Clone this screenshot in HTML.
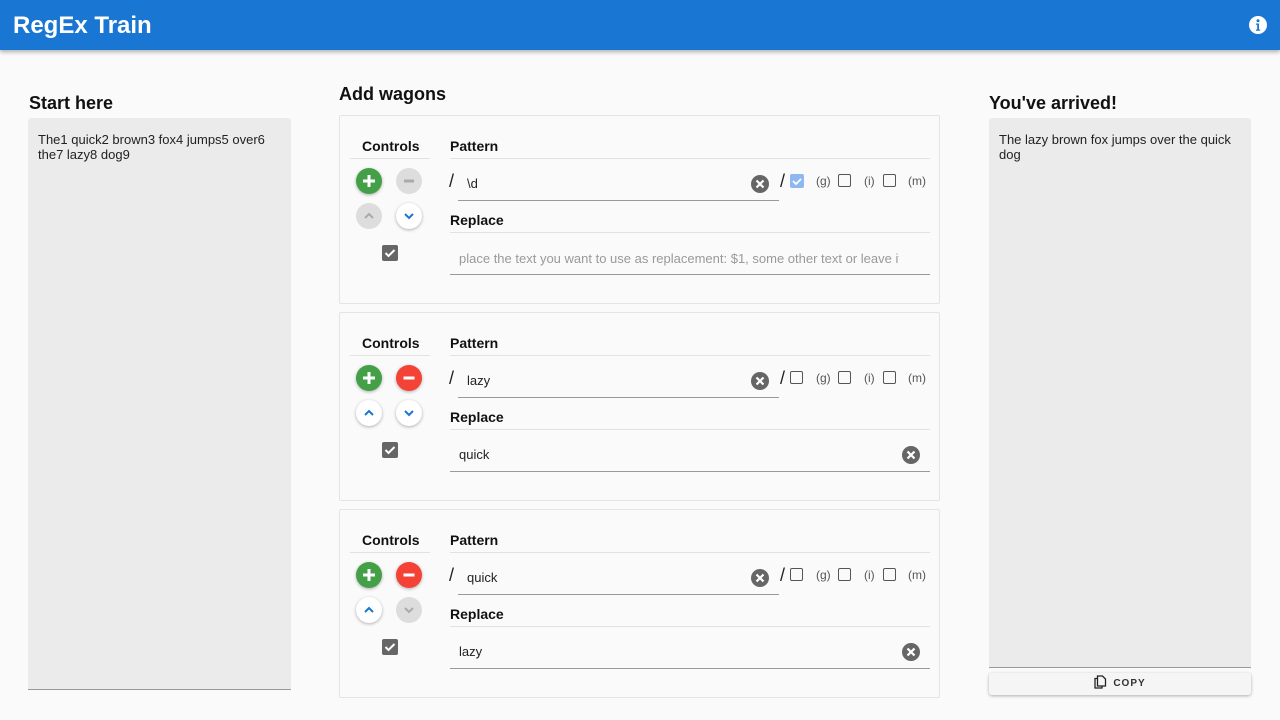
<!DOCTYPE html>
<html><head><meta charset="utf-8"><style>
*{box-sizing:border-box;margin:0;padding:0}
body{width:1280px;height:720px;background:#fafafa;font-family:"Liberation Sans",sans-serif;color:#222;position:relative;overflow:hidden}
.abs{position:absolute}
.hdr{left:0;top:0;width:1280px;height:50px;background:#1976d2;box-shadow:0 2px 4px rgba(0,0,0,.3)}
.hdr h1{position:absolute;left:13px;top:12px;color:#fff;font-size:24px;font-weight:bold}
h2{position:absolute;font-size:18px;font-weight:bold;color:#111}
.ta{background:#ebebeb;border-bottom:1px solid #999;border-radius:3px 3px 0 0;font-size:13px;color:#222;padding:14px 10px;line-height:15px}
.card{position:absolute;left:339px;width:601px;height:189px;border:1px solid #e4e4e4;background:#fafafa;border-radius:2px}
.card *{position:absolute}
.lbl{font-size:14px;font-weight:bold;color:#111}
.hl{height:1px;background:#e2e2e2}
.btn{width:26px;height:26px;border-radius:50%;box-shadow:0 1px 3px rgba(0,0,0,.3)}
.btn svg{left:0;top:0}
.ul{height:1px;background:#999}
.t{font-size:13px;color:#222}
.small{font-size:12px;color:#555}
.cb{width:13px;height:13px;border:1.5px solid #555;border-radius:2px}
</style></head><body>
<div class="abs hdr"><h1>RegEx Train</h1>
<svg class="abs" style="left:1248px;top:15px" width="20" height="20" viewBox="0 0 20 20"><circle cx="10" cy="10" r="9" fill="#fff"/><circle cx="10" cy="5.8" r="1.5" fill="#1976d2"/><path d="M8 8.5h3v6h1.2v1.2H8v-1.2h1.2v-4.8H8z" fill="#1976d2"/></svg></div>

<h2 style="left:29px;top:93px">Start here</h2>
<div class="abs ta" style="left:28px;top:118px;width:263px;height:572px">The1 quick2 brown3 fox4 jumps5 over6<br>the7 lazy8 dog9</div>
<h2 style="left:339px;top:84px">Add wagons</h2>
<h2 style="left:989px;top:93px">You've arrived!</h2>
<div class="abs ta" style="left:989px;top:118px;width:262px;height:550px">The lazy brown fox jumps over the quick<br>dog</div>
<div class="abs" style="left:989px;top:673px;width:262px;height:22px;background:#f5f5f5;border-radius:3px;box-shadow:0 1px 3px rgba(0,0,0,.3);font-size:10px;font-weight:bold;letter-spacing:1px;color:#333;text-align:center;line-height:22px">
<svg style="vertical-align:-3px;margin-right:6px" width="13" height="14" viewBox="0 0 13 14"><path d="M3.5 3.5h-2.5v9.5h7v-2" fill="none" stroke="#222" stroke-width="1.3"/><path d="M3.5 1h5l3 3v7h-8z" fill="none" stroke="#222" stroke-width="1.3"/></svg>COPY</div>

<div class="card" style="top:115px">
<div class="lbl" style="left:22px;top:22px">Controls</div><div class="hl" style="left:10px;top:42px;width:80px"></div>
<div class="lbl" style="left:110px;top:22px">Pattern</div><div class="hl" style="left:110px;top:42px;width:480px"></div>
<div class="btn" style="left:16px;top:52px;background:#43a047"><svg width="26" height="26"><path d="M13 7v12M7 13h12" stroke="#fff" stroke-width="3"/></svg></div>
<div class="btn" style="left:56px;top:52px;background:#ddd;box-shadow:none"><svg width="26" height="26"><path d="M8 13h10" stroke="#aaa" stroke-width="3"/></svg></div>
<div class="btn" style="left:16px;top:87px;background:#ddd;box-shadow:none"><svg width="26" height="26"><path d="M9 15l4-4 4 4" fill="none" stroke="#aaa" stroke-width="2"/></svg></div>
<div class="btn" style="left:56px;top:87px;background:#fff"><svg width="26" height="26"><path d="M9 11l4 4 4-4" fill="none" stroke="#1976d2" stroke-width="2"/></svg></div>
<svg style="left:42px;top:129px" width="16" height="16"><rect width="16" height="16" rx="2" fill="#666"/><path d="M3.5 8l3 3 6-6" fill="none" stroke="#fff" stroke-width="2"/></svg>
<div class="t" style="left:109px;top:55px;font-size:18px">/</div>
<div class="t" style="left:127px;top:60px">\d</div>
<svg style="left:411px;top:59px" width="18" height="18"><circle cx="9" cy="9" r="9" fill="#666"/><path d="M5.5 5.5l7 7M12.5 5.5l-7 7" stroke="#fff" stroke-width="2.2"/></svg>
<div class="ul" style="left:118px;top:84px;width:321px"></div>
<div class="t" style="left:440px;top:55px;font-size:18px">/</div>
<svg style="left:450px;top:58px" width="14" height="14"><rect width="14" height="14" rx="2" fill="#90b8f0"/><path d="M3 7l3 3 5-5" fill="none" stroke="#fff" stroke-width="1.8"/></svg>
<div class="small" style="left:476px;top:58px">(g)</div><div class="cb" style="left:498px;top:58px"></div>
<div class="small" style="left:524px;top:58px">(i)</div><div class="cb" style="left:543px;top:58px"></div>
<div class="small" style="left:568px;top:58px">(m)</div>
<div class="lbl" style="left:110px;top:96px">Replace</div><div class="hl" style="left:110px;top:116px;width:480px"></div>
<div class="t" style="left:119px;top:135px;color:#999;white-space:nowrap;width:440px;overflow:hidden">place the text you want to use as replacement: $1, some other text or leave it e</div>
<div class="ul" style="left:110px;top:158px;width:480px"></div>
</div>

<div class="card" style="top:312px">
<div class="lbl" style="left:22px;top:22px">Controls</div><div class="hl" style="left:10px;top:42px;width:80px"></div>
<div class="lbl" style="left:110px;top:22px">Pattern</div><div class="hl" style="left:110px;top:42px;width:480px"></div>
<div class="btn" style="left:16px;top:52px;background:#43a047"><svg width="26" height="26"><path d="M13 7v12M7 13h12" stroke="#fff" stroke-width="3"/></svg></div>
<div class="btn" style="left:56px;top:52px;background:#f44336"><svg width="26" height="26"><path d="M7.5 13h11" stroke="#fff" stroke-width="3"/></svg></div>
<div class="btn" style="left:16px;top:87px;background:#fff"><svg width="26" height="26"><path d="M9 15l4-4 4 4" fill="none" stroke="#1976d2" stroke-width="2"/></svg></div>
<div class="btn" style="left:56px;top:87px;background:#fff"><svg width="26" height="26"><path d="M9 11l4 4 4-4" fill="none" stroke="#1976d2" stroke-width="2"/></svg></div>
<svg style="left:42px;top:129px" width="16" height="16"><rect width="16" height="16" rx="2" fill="#666"/><path d="M3.5 8l3 3 6-6" fill="none" stroke="#fff" stroke-width="2"/></svg>
<div class="t" style="left:109px;top:55px;font-size:18px">/</div>
<div class="t" style="left:127px;top:60px">lazy</div>
<svg style="left:411px;top:59px" width="18" height="18"><circle cx="9" cy="9" r="9" fill="#666"/><path d="M5.5 5.5l7 7M12.5 5.5l-7 7" stroke="#fff" stroke-width="2.2"/></svg>
<div class="ul" style="left:118px;top:84px;width:321px"></div>
<div class="t" style="left:440px;top:55px;font-size:18px">/</div>
<div class="cb" style="left:450px;top:58px"></div>
<div class="small" style="left:476px;top:58px">(g)</div><div class="cb" style="left:498px;top:58px"></div>
<div class="small" style="left:524px;top:58px">(i)</div><div class="cb" style="left:543px;top:58px"></div>
<div class="small" style="left:568px;top:58px">(m)</div>
<div class="lbl" style="left:110px;top:96px">Replace</div><div class="hl" style="left:110px;top:116px;width:480px"></div>
<div class="t" style="left:119px;top:134px">quick</div>
<svg style="left:562px;top:133px" width="18" height="18"><circle cx="9" cy="9" r="9" fill="#666"/><path d="M5.5 5.5l7 7M12.5 5.5l-7 7" stroke="#fff" stroke-width="2.2"/></svg>
<div class="ul" style="left:110px;top:158px;width:480px"></div>
</div>

<div class="card" style="top:509px">
<div class="lbl" style="left:22px;top:22px">Controls</div><div class="hl" style="left:10px;top:42px;width:80px"></div>
<div class="lbl" style="left:110px;top:22px">Pattern</div><div class="hl" style="left:110px;top:42px;width:480px"></div>
<div class="btn" style="left:16px;top:52px;background:#43a047"><svg width="26" height="26"><path d="M13 7v12M7 13h12" stroke="#fff" stroke-width="3"/></svg></div>
<div class="btn" style="left:56px;top:52px;background:#f44336"><svg width="26" height="26"><path d="M7.5 13h11" stroke="#fff" stroke-width="3"/></svg></div>
<div class="btn" style="left:16px;top:87px;background:#fff"><svg width="26" height="26"><path d="M9 15l4-4 4 4" fill="none" stroke="#1976d2" stroke-width="2"/></svg></div>
<div class="btn" style="left:56px;top:87px;background:#ddd;box-shadow:none"><svg width="26" height="26"><path d="M9 11l4 4 4-4" fill="none" stroke="#aaa" stroke-width="2"/></svg></div>
<svg style="left:42px;top:129px" width="16" height="16"><rect width="16" height="16" rx="2" fill="#666"/><path d="M3.5 8l3 3 6-6" fill="none" stroke="#fff" stroke-width="2"/></svg>
<div class="t" style="left:109px;top:55px;font-size:18px">/</div>
<div class="t" style="left:127px;top:60px">quick</div>
<svg style="left:411px;top:59px" width="18" height="18"><circle cx="9" cy="9" r="9" fill="#666"/><path d="M5.5 5.5l7 7M12.5 5.5l-7 7" stroke="#fff" stroke-width="2.2"/></svg>
<div class="ul" style="left:118px;top:84px;width:321px"></div>
<div class="t" style="left:440px;top:55px;font-size:18px">/</div>
<div class="cb" style="left:450px;top:58px"></div>
<div class="small" style="left:476px;top:58px">(g)</div><div class="cb" style="left:498px;top:58px"></div>
<div class="small" style="left:524px;top:58px">(i)</div><div class="cb" style="left:543px;top:58px"></div>
<div class="small" style="left:568px;top:58px">(m)</div>
<div class="lbl" style="left:110px;top:96px">Replace</div><div class="hl" style="left:110px;top:116px;width:480px"></div>
<div class="t" style="left:119px;top:134px">lazy</div>
<svg style="left:562px;top:133px" width="18" height="18"><circle cx="9" cy="9" r="9" fill="#666"/><path d="M5.5 5.5l7 7M12.5 5.5l-7 7" stroke="#fff" stroke-width="2.2"/></svg>
<div class="ul" style="left:110px;top:158px;width:480px"></div>
</div>
</body></html>
